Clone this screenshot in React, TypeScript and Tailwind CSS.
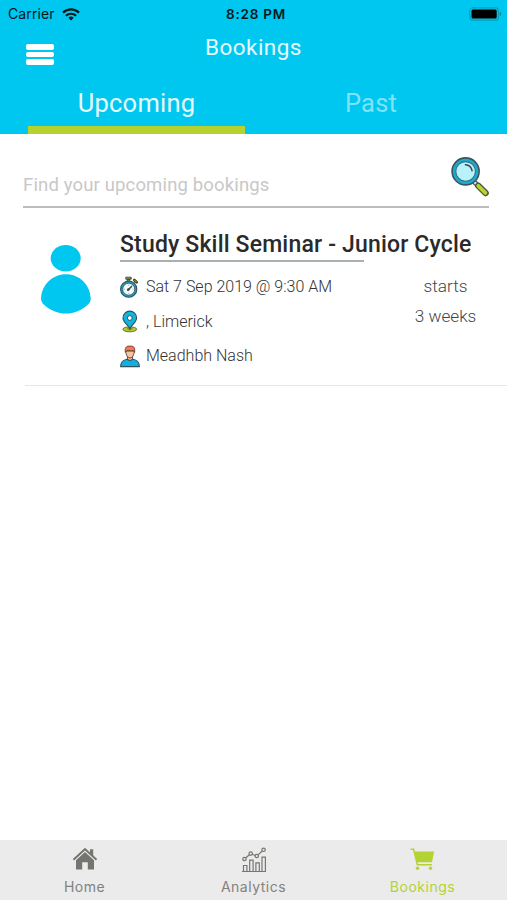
import React from 'react';

const WifiIcon = () => (
    <svg width="18" height="13" viewBox="0 0 18 13" fill="none" stroke="#05181c" strokeWidth="2.2">
        <path d="M1 4.6a11.6 11.6 0 0 1 16 0" />
        <path d="M3.9 7.8a7.4 7.4 0 0 1 10.2 0" />
        <path d="M9 12.4 6.3 9.7a3.9 3.9 0 0 1 5.4 0z" fill="#05181c" stroke="none" />
    </svg>
);

const BatteryIcon = () => (
    <svg width="33" height="14" viewBox="0 0 33 14">
        <rect x="0.8" y="0.8" width="28.6" height="12.4" rx="3" fill="none" stroke="#0a9db8" strokeWidth="1.2" />
        <rect x="2.5" y="2.5" width="25.2" height="9" rx="1.5" fill="#000" />
        <path d="M30.8 4.8c1.6.6 1.6 3.8 0 4.4z" fill="#0a7d92" />
    </svg>
);

const SearchIcon = () => (
    <svg width="38" height="42" viewBox="0 0 38 42">
        <path d="m22.3 25 4 4" stroke="#4a575b" strokeWidth="5" />
        <path d="m22.8 25.5 3.4 3.4" stroke="#d5eef2" strokeWidth="2.4" />
        <path d="m27.3 29.8 7.3 7.3" stroke="#4b5636" strokeWidth="6.4" strokeLinecap="round" />
        <path d="m27.3 29.8 7.1 7.1" stroke="#b5d334" strokeWidth="3.8" strokeLinecap="round" />
        <circle cx="14.6" cy="15.4" r="13.5" fill="#1cabce" stroke="#3b565f" strokeWidth="1.6" />
        <circle cx="14.6" cy="15.4" r="9.8" fill="#b9f2fb" stroke="#33707f" strokeWidth="1.1" />
        <path d="M14.4 8.8c3.7.2 6 2.3 6.7 6" fill="none" stroke="#38474c" strokeWidth="1.4" strokeLinecap="round" />
    </svg>
);

const StopwatchIcon = () => (
    <svg width="20" height="23" viewBox="0 0 20 23">
        <path d="M5.8 1.2h5.4v2H5.8zM7.2 3.2h2.6v2.5H7.2z" fill="#a3a83c" stroke="#38474c" strokeWidth="0.9" />
        <path d="m14.2 6.2 1.4-1.4" stroke="#38474c" strokeWidth="1.6" />
        <path d="m14.3 3.9 2.4 2.4" stroke="#4d4a28" strokeWidth="2.8" strokeLinecap="round" />
        <path d="m14.8 4.4 1.4 1.4" stroke="#a3a83c" strokeWidth="1" strokeLinecap="round" />
        <circle cx="8.7" cy="13.2" r="8.1" fill="#1c9fc2" stroke="#31525d" strokeWidth="1.1" />
        <circle cx="8.7" cy="13.2" r="6" fill="#f4fbfc" stroke="#31525d" strokeWidth="0.8" />
        <path d="M8.7 8.6v1M8.7 16.8v1M4.1 13.2h1M12.3 13.2h1" stroke="#7d8e93" strokeWidth="0.8" />
        <path d="m7.8 14.2 3.7-3.8" stroke="#38474c" strokeWidth="1.5" strokeLinecap="round" />
        <circle cx="8.4" cy="13.5" r="1.3" fill="#38474c" />
    </svg>
);

const PinIcon = () => (
    <svg width="20" height="23" viewBox="0 0 20 23">
        <ellipse cx="9.8" cy="19.3" rx="6.9" ry="2.5" fill="#b5c934" stroke="#5b6634" strokeWidth="0.9" />
        <ellipse cx="9.8" cy="18.8" rx="3" ry="1.1" fill="#7d922d" />
        <path d="M9.8 18.9C8.6 15.2 3 12.3 3 7.9a6.8 6.8 0 0 1 13.6 0c0 4.4-5.6 7.3-6.8 11z" fill="#12b5df" stroke="#31525d" strokeWidth="1.1" />
        <circle cx="9.8" cy="8" r="2.4" fill="#fff" stroke="#31525d" strokeWidth="1" />
    </svg>
);

const PersonIcon = () => (
    <svg width="20" height="23" viewBox="0 0 20 23">
        <path d="M7.4 11v4l2.6 1.6 2.6-1.6v-4z" fill="#eeb18f" stroke="#57443e" strokeWidth="0.9" />
        <path d="M.7 21.6c0-4.6 1.6-6.5 6.5-7.4 1.4 1.7 4.2 1.7 5.6 0 4.9.9 6.5 2.8 6.5 7.4z" fill="#12aee0" stroke="#31525d" strokeWidth="1.1" />
        <path d="M5.8 6c0 4 1.8 6.8 4.2 6.8S14.2 10 14.2 6z" fill="#f4c4a4" stroke="#57443e" strokeWidth="0.9" />
        <path d="M5.4 7.4C4.6 3.2 6 1.1 9 1.1h2.6c2.6.2 3.6 2.6 3 6.3l-1-1.8H6.5z" fill="#ef7b50" stroke="#74402f" strokeWidth="0.9" />
    </svg>
);

const Avatar = () => (
    <svg width="50" height="71" viewBox="0 0 50 71" fill="#00c7ef">
        <ellipse cx="24.7" cy="14.2" rx="15" ry="13.2" />
        <path d="M0 54C1 41 11 30.2 25 30.2S49 41 49.7 54c.2 3-.9 5-3 6.8C35 72.5 15 72.5 3 60.8 1 59 0 57 0 54z" />
    </svg>
);

const HomeIcon = () => (
    <svg width="26" height="24" viewBox="0 0 26 24" fill="#75756f">
        <path d="M18 2.2h3.2v7L18 5.8z" />
        <path d="M13 .8.8 12l1.3 1.4L13 3.5l10.9 9.9 1.3-1.4z" />
        <path d="m13 5.1 9 8.2v9.2h-6.2v-7.2h-5.6v7.2H4v-9.2z" />
    </svg>
);

const AnalyticsIcon = () => (
    <svg width="26" height="26" viewBox="0 0 26 26" fill="none" stroke="#777770" strokeWidth="1.2">
        <path d="M1 24.5h24M2.5 24.5v-6h3.4v6M8.7 24.5V13.1h3.4v11.4M14.9 24.5v-8.6h3.4v8.6M21 24.5V10.2h3.4v14.3" />
        <path d="m4.9 10.8 3.5-3.1M11.2 7.3l3.2 1.2M17 7.9l4.3-3.9" />
        <circle cx="3.5" cy="12" r="1.7" />
        <circle cx="9.7" cy="6.6" r="1.7" />
        <circle cx="15.8" cy="9" r="1.7" />
        <circle cx="22.6" cy="2.8" r="1.7" />
    </svg>
);

const CartIcon = () => (
    <svg width="25" height="24" viewBox="0 0 25 24" fill="#b4d333">
        <path d="M4.2 4.5h19.9l-2.1 10.7H6.7z" />
        <path d="M1.2 2.2h2.4l3.8 15.6h14" fill="none" stroke="#b4d333" strokeWidth="1.6" strokeLinecap="round" />
        <circle cx="7.5" cy="21.3" r="1.7" />
        <circle cx="20.5" cy="21.3" r="1.7" />
    </svg>
);

const details = [
    { icon: <StopwatchIcon />, text: 'Sat 7 Sep 2019 @ 9:30 AM' },
    { icon: <PinIcon />, text: ', Limerick' },
    { icon: <PersonIcon />, text: 'Meadhbh Nash' },
];

const navItems = [
    { icon: <HomeIcon />, label: 'Home', color: 'text-[#82827f]' },
    { icon: <AnalyticsIcon />, label: 'Analytics', color: 'text-[#82827f]' },
    { icon: <CartIcon />, label: 'Bookings', color: 'text-[#b4d333]' },
];

const Header = () => (
    <header className="h-[134px] bg-[#00c7ef] flex flex-col">
        <div className="h-7 shrink-0 grid grid-cols-3 items-center pl-2 pr-[5px] font-[Inter,sans-serif] text-[#05181c]">
            <div className="flex items-center gap-[7px]">
                <span className="text-[14px] leading-5 tracking-[0.1px]">Carrier</span>
                <WifiIcon />
            </div>
            <span className="pl-[2px] text-center text-[13.5px] font-semibold leading-5 tracking-[0.75px]">8:28 PM</span>
            <div className="flex justify-end">
                <BatteryIcon />
            </div>
        </div>
        <div className="h-[53px] shrink-0 grid grid-cols-3 px-[26px]">
            <button className="flex flex-col gap-[2px] pt-4 w-7">
                <span className="h-[5.5px] w-full rounded-xs bg-white"></span>
                <span className="h-[5.5px] w-full rounded-xs bg-white"></span>
                <span className="h-[5.5px] w-full rounded-xs bg-white"></span>
            </button>
            <h1 className="text-center text-[22.5px] leading-[38px] tracking-[0.45px] text-white/90">Bookings</h1>
        </div>
        <div className="grow flex pl-7">
            <div className="w-[217px] border-b-8 border-[#b7d22f] text-center text-[25.5px] leading-[45px] tracking-[0.25px] text-white/90">Upcoming</div>
            <div className="w-[252px] text-center text-[25.5px] leading-[45px] tracking-[0.2px] text-white/50">Past</div>
        </div>
    </header>
);

const App = () => {
    return (
        <div className="w-full h-[900px] flex flex-col bg-white font-[Roboto,sans-serif] overflow-hidden">
            <Header />
            <main className="grow">
                <div className="ml-[23px] mr-[18px] h-[74px] border-b-2 border-[#bdbdbd] flex justify-between">
                    <span className="pt-[39px] text-[18.5px] leading-6 tracking-[0.15px] text-[#c8c8c8]">Find your upcoming bookings</span>
                    <div className="pt-[22px]">
                        <SearchIcon />
                    </div>
                </div>
                <article className="ml-[25px] h-[178px] border-b border-[#e6e6e6] flex">
                    <div className="w-[95px] shrink-0 pl-4 pt-[36px]">
                        <Avatar />
                    </div>
                    <div className="grow pt-[22px]">
                        <h2 className="text-[23px] leading-[30px] tracking-[0.17px] font-medium text-[#2a2a2a] whitespace-nowrap">Study Skill Seminar - Junior Cycle</h2>
                        <div className="h-[2px] w-[244px] bg-[#a9b0b0]"></div>
                        <div className="flex">
                            <ul className="w-[264px] pt-[8px] font-light text-[16px] text-[#333]">
                                {details.map((d) => (
                                    <li key={d.text} className="flex items-center gap-[6px] h-[34.6px]">
                                        {d.icon}
                                        <span className="whitespace-nowrap">{d.text}</span>
                                    </li>
                                ))}
                            </ul>
                            <div className="w-[123px] pt-[10px] text-center font-light text-[17.2px] leading-[29.5px] text-[#444]">
                                <p>starts</p>
                                <p>3 weeks</p>
                            </div>
                        </div>
                    </div>
                </article>
            </main>
            <nav className="h-[60px] bg-[#ebebeb] grid grid-cols-3">
                {navItems.map((item) => (
                    <button key={item.label} className={`flex flex-col items-center pt-[7px] font-[Inter,sans-serif] ${item.color}`}>
                        <span className="h-[29px]">{item.icon}</span>
                        <span className="text-[14px] leading-[22px] tracking-[0.5px]">{item.label}</span>
                    </button>
                ))}
            </nav>
        </div>
    );
};

export default App;
